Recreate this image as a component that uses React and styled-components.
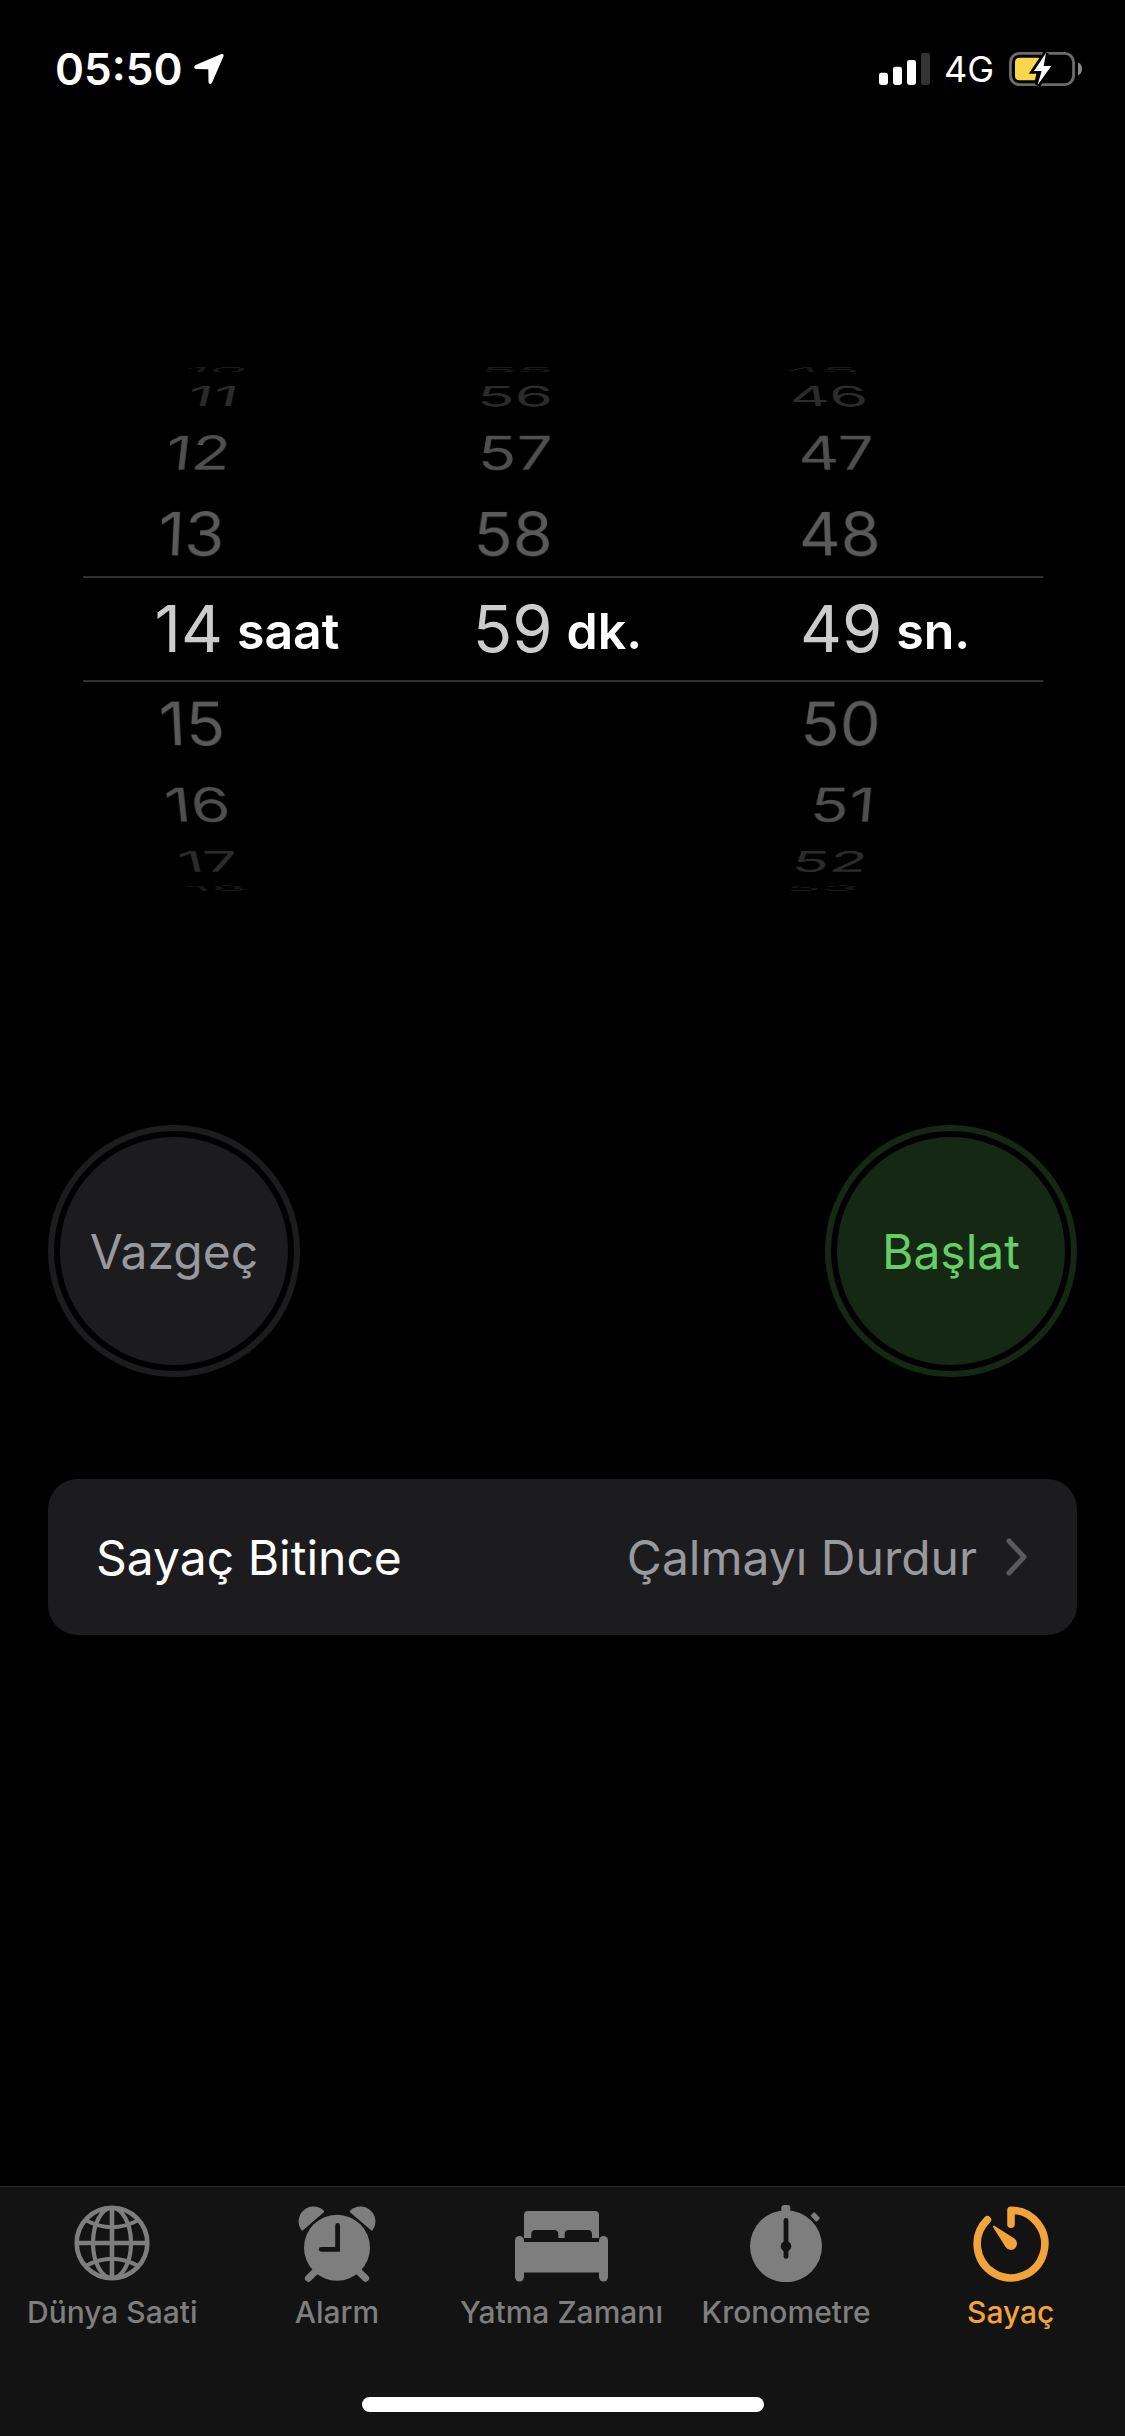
import React, { useState } from 'react';
import styled, { createGlobalStyle } from 'styled-components';

const columns = [
    { id: "hours", unit: "saat", min: 0, max: 23 },
    { id: "minutes", unit: "dk.", min: 0, max: 59 },
    { id: "seconds", unit: "sn.", min: 0, max: 59 },
];

// how many rows of the drum can be seen on each side of the selected one
const VISIBLE = 4;

// text colour of a row, by its distance from the selected one
const fade = ["#cccccc", "#5a5a5a", "#4f4f4f", "#2b2b2b", "#181818"];

const GlobeIcon = () => (
    <svg width="78" height="78" viewBox="0 0 78 78" fill="none" stroke="currentColor" strokeWidth="4.6" aria-hidden="true">
        <circle cx="39" cy="39" r="35.3" />
        <ellipse cx="39" cy="39" rx="19" ry="35" strokeWidth="4.2" />
        <path d="M39 4V74M4 39H74" />
        <path d="M13.5 16.5Q39 30 64.5 16.5M13.5 61.5Q39 48 64.5 61.5" strokeWidth="4" />
    </svg>
);

const AlarmIcon = () => (
    <svg width="78" height="78" viewBox="0 0 78 78" fill="currentColor" aria-hidden="true">
        <path d="M3.4 26.3A15 15 0 0 1 25.4 6.2Q26.8 7.4 25.6 8.6L5 26.2Q4 27 3.4 26.3Z" />
        <path d="M74.6 26.3A15 15 0 0 0 52.6 6.2Q51.2 7.4 52.4 8.6L73 26.2Q74 27 74.6 26.3Z" />
        <path d="M10.4 74.2L20 65M67.6 74.2L58 65" stroke="currentColor" strokeWidth="7" strokeLinecap="round" />
        <circle cx="39" cy="43.7" r="33" />
        <path d="M39.6 21.5V45.3H23.2" fill="none" stroke="#131313" strokeWidth="4.8" strokeLinecap="round" />
    </svg>
);

const BedIcon = () => (
    <svg width="95" height="78" viewBox="0 0 95 78" fill="currentColor" aria-hidden="true">
        <path d="M10 34V11Q10 7 14 7H81Q85 7 85 11V34H78V30Q78 26 74 26H55Q50.7 26 50.7 30V34H44.3V30Q44.3 26 40 26H21.5Q17.3 26 17.3 30V34Z" />
        <path d="M9 38H86V68.5H9Z" />
        <rect x="1" y="32" width="9" height="45.6" rx="4.5" />
        <rect x="85" y="32" width="9" height="45.6" rx="4.5" />
    </svg>
);

const StopwatchIcon = () => (
    <svg width="78" height="78" viewBox="0 0 78 78" fill="currentColor" aria-hidden="true">
        <rect x="34.3" y="1" width="9" height="10" rx="3" />
        <rect x="64" y="10.2" width="8.6" height="5.4" rx="1" transform="rotate(47 68.3 12.9)" />
        <circle cx="39" cy="42.3" r="36" />
        <path d="M39 16.4V52.4" stroke="#131313" strokeWidth="4.8" strokeLinecap="round" />
        <circle cx="39" cy="42.3" r="5.3" fill="#131313" />
    </svg>
);

const TimerIcon = () => (
    <svg width="78" height="78" viewBox="0 0 78 78" fill="none" aria-hidden="true">
        <path d="M39 20.3V6.2A33.8 33.8 0 1 1 15.4 15.8" stroke="currentColor" strokeWidth="7.6" strokeLinecap="round" strokeLinejoin="round" />
        <path d="M22.3 21.8L42.4 34.6A6.2 6.2 0 1 1 33.6 43L21 23Q20.8 21.4 22.3 21.8Z" fill="currentColor" />
    </svg>
);

const LocationIcon = () => (
    <svg width="30" height="32" viewBox="0 0 30 32" fill="#fff" aria-hidden="true">
        <path d="M1.6 12.1L26.8 1.2Q30.4 .2 29.4 3.6L18.2 29.2Q17.4 31 16 30.9Q14.6 30.7 14.5 29L14.3 16.3L2 15.9Q.3 15.7 .2 14.2Q.2 12.8 1.6 12.1Z" />
    </svg>
);

const SignalIcon = () => (
    <svg width="51" height="34" viewBox="0 0 51 34" fill="#fff" role="img" aria-label="Sinyal">
        <rect x="0" y="20.7" width="9" height="12.3" rx="2.4" />
        <rect x="14" y="14.7" width="9" height="18.3" rx="2.4" />
        <rect x="28" y="8" width="9" height="25" rx="2.4" />
        <rect x="42" y="1" width="9" height="32" rx="2.4" fill="#333" />
    </svg>
);

const BatteryIcon = () => (
    <svg width="75" height="36" viewBox="0 0 75 36" role="img" aria-label="Pil şarj oluyor">
        <rect x="2.4" y="2.4" width="63.2" height="31.2" rx="9" fill="none" stroke="#6b6b6b" strokeWidth="2.9" />
        <path d="M70 11.6Q74 13.4 74 18T70 24.4Z" fill="#8a8a8a" />
        <path d="M11.5 6.8H31.5L27 29.2H11.5Q7 29.2 7 24.7V11.3Q7 6.8 11.5 6.8Z" fill="#fad64b" />
        <path d="M38 2L26 20H33.6L29.6 34L43.3 15H35.7Z" fill="#fff" stroke="#000" strokeWidth="5.6" paintOrder="stroke" />
    </svg>
);

const tabs = [
    { label: "Dünya Saati", href: "#world", Icon: GlobeIcon },
    { label: "Alarm", href: "#alarm", Icon: AlarmIcon },
    { label: "Yatma Zamanı", href: "#bedtime", Icon: BedIcon },
    { label: "Kronometre", href: "#stopwatch", Icon: StopwatchIcon },
    { label: "Sayaç", href: "#timer", Icon: TimerIcon },
];

const Wheel = ({ column, value, onPick }) => {
    const rows = [];
    for (let n = value - VISIBLE; n <= value + VISIBLE; n++) {
        if (n >= column.min && n <= column.max) rows.push(n);
    }

    return (
        <StyledWheel>
            <Drum role="listbox" aria-label={column.unit}>
                {rows.map((n) => (
                    <Row
                        key={n}
                        role="option"
                        aria-selected={n === value}
                        $offset={n - value}
                        onClick={() => onPick(n)}
                    >
                        {n}
                    </Row>
                ))}
            </Drum>
            <Unit>{column.unit}</Unit>
        </StyledWheel>
    );
};

const App = () => {
    const [time, setTime] = useState({ hours: 14, minutes: 59, seconds: 49 });
    const [activeTab, setActiveTab] = useState("Sayaç");

    return (
        <Screen>
            <GlobalStyle />
            <StatusBar>
                <StatusGroup $gap={12}>
                    <Clock>05:50</Clock>
                    <LocationIcon />
                </StatusGroup>
                <StatusGroup $gap={14}>
                    <SignalIcon />
                    <Network>4G</Network>
                    <BatteryIcon />
                </StatusGroup>
            </StatusBar>

            <Main>
                <Picker>
                    <Band />
                    <Wheels>
                        {columns.map((column) => (
                            <Wheel
                                key={column.id}
                                column={column}
                                value={time[column.id]}
                                onPick={(n) => setTime({ ...time, [column.id]: n })}
                            />
                        ))}
                    </Wheels>
                </Picker>

                <Actions>
                    <RoundButton type="button" $fill="#1c1c1e" $text="#98989f">Vazgeç</RoundButton>
                    <RoundButton type="button" $fill="#142814" $text="#67ce67">Başlat</RoundButton>
                </Actions>

                <SoundButton type="button">
                    <span>Sayaç Bitince</span>
                    <SoundValue>
                        Çalmayı Durdur
                        <svg width="24" height="38" viewBox="0 0 24 38" fill="none" aria-hidden="true">
                            <path d="M4 3L19 19L4 35" stroke="#5a5a5e" strokeWidth="5" strokeLinecap="round" strokeLinejoin="round" />
                        </svg>
                    </SoundValue>
                </SoundButton>
            </Main>

            <TabBar>
                <Tabs>
                    {tabs.map(({ label, href, Icon }) => (
                        <Tab
                            key={label}
                            href={href}
                            $active={label === activeTab}
                            aria-current={label === activeTab ? "page" : undefined}
                            onClick={() => setActiveTab(label)}
                        >
                            <Icon />
                            {label}
                        </Tab>
                    ))}
                </Tabs>
                <HomeIndicator />
            </TabBar>
        </Screen>
    );
};

export default App;

const GlobalStyle = createGlobalStyle`
    * {
        box-sizing: border-box;
    }

    body {
        margin: 0;
        background-color: #000;
        font-family: Inter, "Liberation Sans", sans-serif;
    }

    button {
        font-family: inherit;
        cursor: pointer;
    }
`;

const Screen = styled.div`
    min-height: 100vh;
    background-color: #000;
    color: #fff;

    display: flex;
    flex-direction: column;
`;

const StatusBar = styled.header`
    height: 132px;
    padding: 6px 42px 0 55px;

    display: flex;
    justify-content: space-between;
    align-items: center;
`;

const StatusGroup = styled.div`
    display: flex;
    align-items: center;
    gap: ${({ $gap }) => $gap}px;
`;

const Clock = styled.time`
    font-size: 44px;
    font-weight: 600;
`;

const Network = styled.span`
    font-size: 36px;
    font-weight: 400;
`;

const Main = styled.main`
    flex: 1;
    padding-top: 173px;

    display: flex;
    flex-direction: column;
`;

/* the band and the wheels share the one cell */
const Picker = styled.section`
    height: 648px;
    perspective: 2860px;

    display: grid;
    align-items: center;

    & > * {
        grid-area: 1 / 1;
    }
`;

const Band = styled.div`
    height: 106px;
    margin: 0 82px 0 83px;
    border-top: 2px solid #303030;
    border-bottom: 2px solid #303030;
`;

const Wheels = styled.div`
    padding: 0 68px;
    transform-style: preserve-3d;

    display: grid;
    grid-template-columns: repeat(3, 1fr);
`;

const StyledWheel = styled.div`
    transform-style: preserve-3d;

    display: grid;
    grid-template-columns: 47% 1fr;
    column-gap: 14px;
    align-items: center;
`;

const Drum = styled.ul`
    margin: 0;
    padding: 0;
    list-style: none;
    transform-style: preserve-3d;

    display: grid;
`;

/* every row sits on the face of a drum with a radius of 286px */
const Row = styled.li`
    grid-area: 1 / 1;
    justify-self: end;

    font-size: 65px;
    line-height: 96px;
    color: ${({ $offset }) => fade[Math.abs($offset)]};
    cursor: pointer;

    transform: translateZ(-286px) rotateX(${({ $offset }) => $offset * -19.5}deg) translateZ(286px);
`;

const Unit = styled.span`
    padding-top: 4px;
    font-size: 50px;
    font-weight: 600;
`;

const Actions = styled.div`
    margin-top: 172px;
    padding: 0 48px;

    display: flex;
    justify-content: space-between;
`;

const RoundButton = styled.button`
    width: 252px;
    height: 252px;
    padding: 6px;

    border: 6px solid ${({ $fill }) => $fill};
    border-radius: 50%;
    background: ${({ $fill }) => $fill} content-box;

    color: ${({ $text }) => $text};
    font-size: 48px;
`;

const SoundButton = styled.button`
    height: 156px;
    margin: 102px 48px 48px;
    padding: 0 48px;

    border: none;
    border-radius: 30px;
    background-color: #1c1c1e;

    color: #fff;
    font-size: 48px;

    display: flex;
    justify-content: space-between;
    align-items: center;
`;

const SoundValue = styled.span`
    color: #98989f;

    display: flex;
    align-items: center;
    gap: 28px;
`;

const TabBar = styled.footer`
    padding: 17px 0 24px;
    border-top: 1px solid #2b2b2b;
    background-color: #131313;

    display: flex;
    flex-direction: column;
    align-items: center;
    gap: 67px;
`;

const Tabs = styled.nav`
    width: 100%;
    padding-right: 2px;

    display: grid;
    grid-template-columns: repeat(5, 1fr);
`;

const Tab = styled.a`
    color: ${({ $active }) => ($active ? "#f2a33c" : "#7e7e7e")};
    font-size: 30px;
    font-weight: 500;
    line-height: 36px;
    text-decoration: none;
    white-space: nowrap;

    display: flex;
    flex-direction: column;
    align-items: center;
    gap: 12px;
`;

const HomeIndicator = styled.div`
    width: 402px;
    height: 15px;
    border-radius: 8px;
    background-color: #fff;
`;
